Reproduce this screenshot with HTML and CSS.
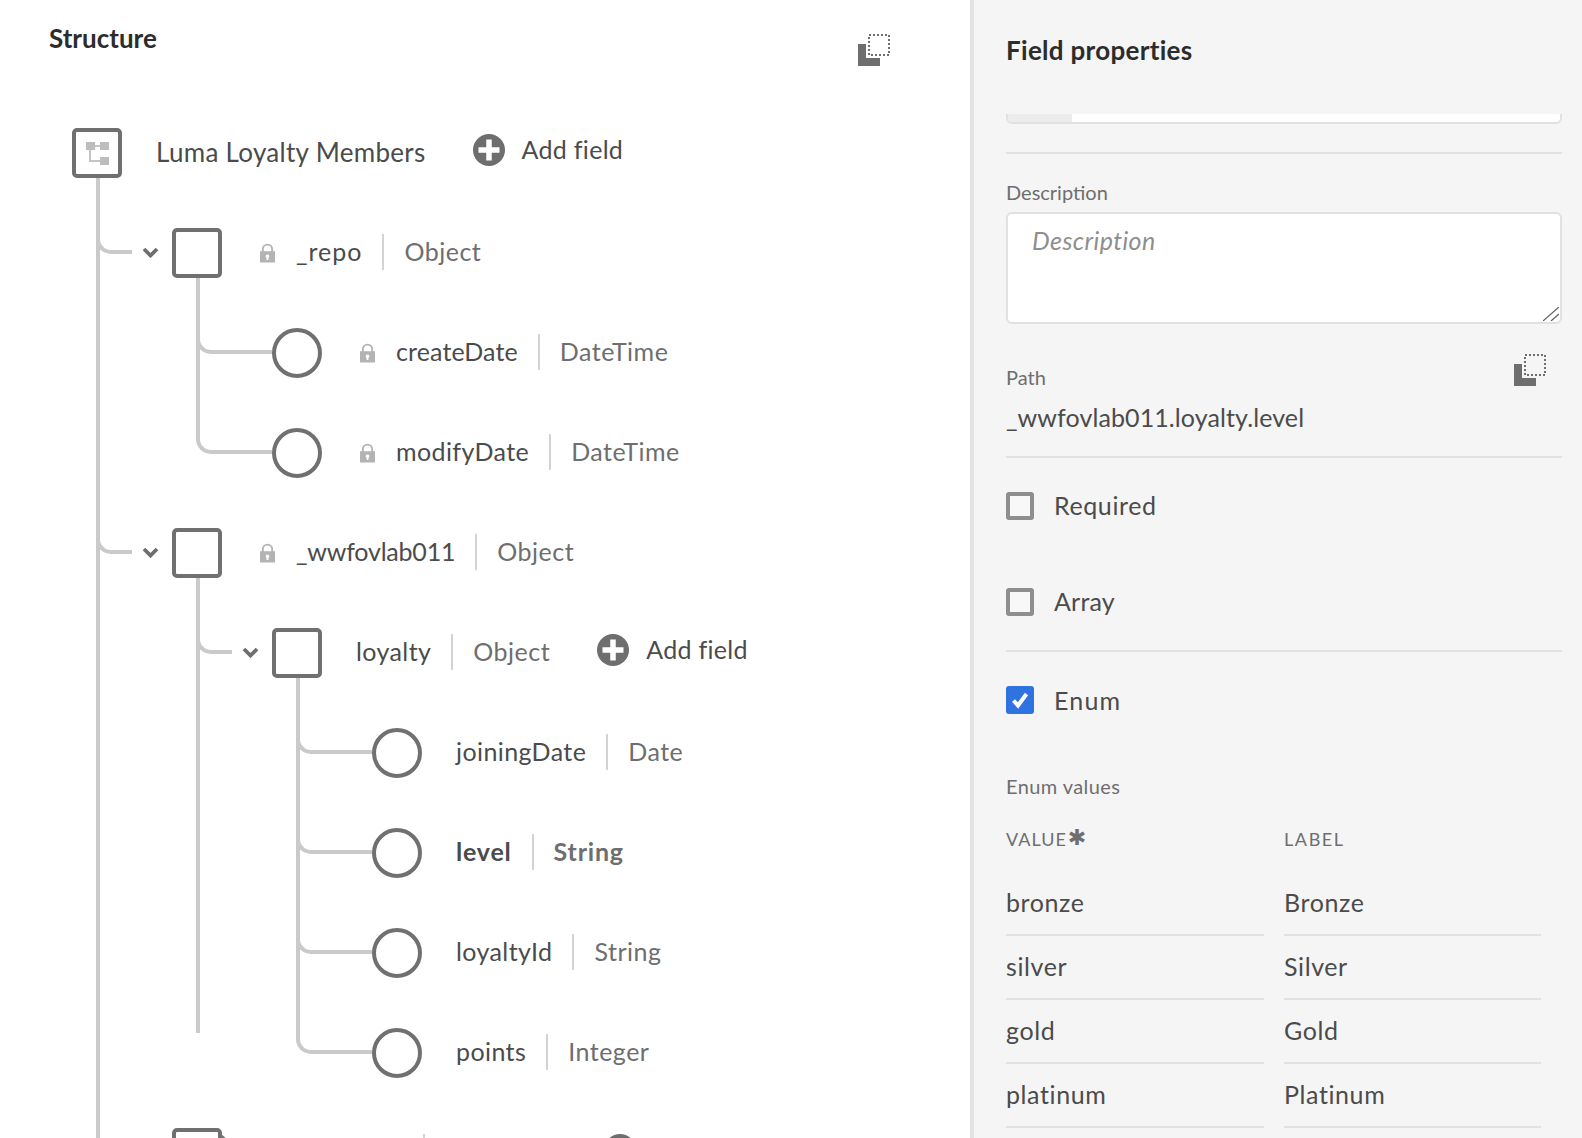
FILE: index.html
```html
<!DOCTYPE html>
<html lang="en">
  <head>
    <meta charset="UTF-8" />
    <title>Schema structure</title>
    <link rel="stylesheet" href="styles.css">
  </head>
  <body>
    <svg class="defs" width="0" height="0">
      <symbol id="copy" viewBox="0 0 32 32">
        <path d="M0 10H8V24H22V32H0Z" fill="#6e6e6e" />
        <rect x="11" y="1" width="20" height="20" fill="none" stroke="#6e6e6e" stroke-width="2" stroke-dasharray="2 2" />
      </symbol>
      <symbol id="plus" viewBox="0 0 32 32">
        <circle cx="16" cy="16" r="16" fill="#6e6e6e" />
        <path d="M16 5.500V26.500M5.500 16H26.500" stroke="#fff" stroke-width="5.500" />
      </symbol>
      <symbol id="lock" viewBox="0 0 16 20">
        <path d="M0 8H2V6A6 6 0 0 1 14 6V8H16V20H0ZM4 8H12V6A4 4 0 0 0 4 6ZM8 11.500A2 2 0 0 0 7 15.200V17.500H9V15.200A2 2 0 0 0 8 11.500Z" fill="#b3b3b3" fill-rule="evenodd" />
      </symbol>
      <symbol id="chevron" viewBox="0 0 17 11">
        <path d="M2 2L8.500 8.500L15 2" fill="none" stroke="#6e6e6e" stroke-width="3.800" />
      </symbol>
    </svg>

    <main class="structure">
      <header class="structure-head">
        <h2 class="title">Structure</h2>
        <svg class="copy-icon"><use href="#copy" /></svg>
      </header>

      <ul class="tree">
        <li>
          <div class="row">
            <span class="shape box">
              <svg class="schema-icon" viewBox="0 0 23 23">
                <path d="M4 8V19H14M9 4H14" fill="none" stroke="#c4c4c4" stroke-width="2" />
                <rect width="9" height="8" fill="#bdbdbd" />
                <rect x="14" width="9" height="8" fill="#bdbdbd" />
                <rect x="14" y="15" width="9" height="8" fill="#bdbdbd" />
              </svg>
            </span>
            <span class="name plain root-name">Luma Loyalty Members</span>
            <span class="add"><svg class="plus-icon"><use href="#plus" /></svg>Add field</span>
          </div>

          <ul class="children top">
            <li>
              <div class="row">
                <span class="gutter"><i class="elbow short"></i><svg class="chevron"><use href="#chevron" /></svg></span>
                <span class="shape box"></span>
                <svg class="lock"><use href="#lock" /></svg>
                <span class="name wide">_repo</span><span class="type">Object</span>
              </div>
              <ul class="children">
                <li>
                  <div class="row">
                    <span class="gutter"><i class="elbow"></i></span>
                    <span class="shape circle"></span>
                    <svg class="lock"><use href="#lock" /></svg>
                    <span class="name tight">createDate</span><span class="type">DateTime</span>
                  </div>
                </li>
                <li>
                  <div class="row">
                    <span class="gutter"><i class="elbow"></i></span>
                    <span class="shape circle"></span>
                    <svg class="lock"><use href="#lock" /></svg>
                    <span class="name">modifyDate</span><span class="type">DateTime</span>
                  </div>
                </li>
              </ul>
            </li>
            <li>
              <div class="row">
                <span class="gutter"><i class="elbow short"></i><svg class="chevron"><use href="#chevron" /></svg></span>
                <span class="shape box"></span>
                <svg class="lock"><use href="#lock" /></svg>
                <span class="name narrow">_wwfovlab011</span><span class="type">Object</span>
              </div>
              <ul class="children">
                <li>
                  <div class="row">
                    <span class="gutter"><i class="elbow short"></i><svg class="chevron"><use href="#chevron" /></svg></span>
                    <span class="shape box"></span>
                    <span class="name plain">loyalty</span><span class="type">Object</span>
                    <span class="add"><svg class="plus-icon"><use href="#plus" /></svg>Add field</span>
                  </div>
                  <ul class="children">
                    <li>
                      <div class="row">
                        <span class="gutter"><i class="elbow"></i></span>
                        <span class="shape circle"></span>
                        <span class="name plain">joiningDate</span><span class="type">Date</span>
                      </div>
                    </li>
                    <li>
                      <div class="row selected">
                        <span class="gutter"><i class="elbow"></i></span>
                        <span class="shape circle"></span>
                        <span class="name plain">level</span><span class="type">String</span>
                      </div>
                    </li>
                    <li>
                      <div class="row">
                        <span class="gutter"><i class="elbow"></i></span>
                        <span class="shape circle"></span>
                        <span class="name plain">loyaltyId</span><span class="type">String</span>
                      </div>
                    </li>
                    <li>
                      <div class="row">
                        <span class="gutter"><i class="elbow"></i></span>
                        <span class="shape circle"></span>
                        <span class="name plain">points</span><span class="type">Integer</span>
                      </div>
                    </li>
                  </ul>
                </li>
              </ul>
            </li>
            <li>
              <div class="row">
                <span class="gutter"><i class="elbow short"></i><svg class="chevron"><use href="#chevron" /></svg></span>
                <span class="shape box notched"></span>
                <span class="cut-name"></span><span class="cut-type"></span>
                <svg class="plus-icon cut-plus"><use href="#plus" /></svg>
              </div>
            </li>
          </ul>
        </li>
      </ul>
    </main>

    <aside class="panel">
      <header class="panel-head">
        <h2 class="title">Field properties</h2>
      </header>

      <div class="clipped-field"><span class="clipped-tab"></span></div>
      <hr class="rule first" />

      <label class="field-label desc-label" for="description">Description</label>
      <div class="desc-wrap">
        <textarea id="description" class="desc-input" placeholder="Description"></textarea>
        <svg class="resize-handle" viewBox="0 0 16 14"><path d="M0 14L16 0M8 14L16 7" stroke="#5c5c5c" stroke-width="1.200" /></svg>
      </div>

      <div class="path-head">
        <span class="field-label path-label">Path</span>
        <svg class="copy-icon"><use href="#copy" /></svg>
      </div>
      <div class="path-value">_wwfovlab011.loyalty.level</div>
      <hr class="rule after-path" />

      <div class="check first-check"><span class="checkbox"></span>Required</div>
      <div class="check array-check"><span class="checkbox"></span>Array</div>
      <hr class="rule after-array" />
      <div class="check enum-check">
        <span class="checkbox on">
          <svg viewBox="0 0 28 28" width="28" height="28"><path d="M7.500 14.500L12 19.500L20.500 8" fill="none" stroke="#fff" stroke-width="4" /></svg>
        </span>Enum
      </div>

      <div class="field-label enum-label">Enum values</div>
      <div class="enum-grid">
        <div class="enum-head">VALUE<span class="star">✱</span></div>
        <div class="enum-head label-head">LABEL</div>
        <div class="enum-cell first-cell">bronze</div>
        <div class="enum-cell first-cell">Bronze</div>
        <div class="enum-cell">silver</div>
        <div class="enum-cell">Silver</div>
        <div class="enum-cell">gold</div>
        <div class="enum-cell">Gold</div>
        <div class="enum-cell">platinum</div>
        <div class="enum-cell">Platinum</div>
      </div>
    </aside>
  </body>
</html>
```

FILE: styles.css
```css
html,
body {
  height: 100%;
}

body {
  margin: 0;
  display: flex;
  height: 1138px;
  overflow: hidden;
  background-color: #fff;
  font-family: Lato, "Noto Sans", sans-serif;
  color: #4b4b4b;
}

.defs {
  position: absolute;
}

.title {
  margin: 0;
  font-size: 26px;
  line-height: 32px;
  font-weight: 700;
  color: #2c2c2c;
}

.copy-icon {
  width: 32px;
  height: 32px;
  flex: none;
}

/* Left side: tree */
.structure {
  width: 970px;
  flex: none;
  overflow: hidden;
}

.structure-head {
  display: flex;
  justify-content: space-between;
  height: 103px;
  box-sizing: border-box;
  padding: 22px 80px 0 49px;
}

.structure-head .copy-icon {
  margin-top: 12px;
}

ul {
  list-style: none;
  margin: 0;
  padding: 0;
}

.tree {
  margin-left: 72px;
}

.children {
  position: relative;
  margin-left: 100px;
}

.children.top {
  margin-left: 0;
}

/* Vertical line under each parent */
.children::before {
  content: "";
  position: absolute;
  left: 24px;
  top: -25px;
  bottom: 70px;
  width: 4px;
  background-color: #cacaca;
}

.row {
  display: flex;
  align-items: center;
  height: 100px;
  font-size: 25px;
}

.gutter {
  display: flex;
  align-self: stretch;
  flex: none;
  width: 100px;
  padding-left: 24px;
  box-sizing: border-box;
}

.elbow {
  display: block;
  width: 76px;
  height: 21px;
  margin-top: 30px;
  box-sizing: border-box;
  border-left: 4px solid #cacaca;
  border-bottom: 4px solid #cacaca;
  border-bottom-left-radius: 15px;
}

.elbow.short {
  width: 36px;
}

.chevron {
  width: 17px;
  height: 11px;
  margin: 44px 0 0 10px;
}

.shape {
  position: relative;
  display: flex;
  align-items: center;
  justify-content: center;
  flex: none;
  width: 50px;
  height: 50px;
  box-sizing: border-box;
  border: 4px solid #707070;
  background-color: #fff;
}

.box {
  border-radius: 5px;
}

.circle {
  border-radius: 50%;
}

.notched::after {
  content: "";
  position: absolute;
  left: 100%;
  top: 2px;
  width: 7px;
  height: 6px;
  margin-left: 3px;
  background-color: #707070;
  clip-path: polygon(0 0, 100% 100%, 0 100%);
}

.schema-icon {
  width: 23px;
  height: 23px;
}

.lock {
  width: 15px;
  height: 20px;
  flex: none;
  margin-left: 38px;
}

.name {
  margin-left: 21px;
  padding: 0 20px 4px 0;
  letter-spacing: 0.4px;
}

.name.plain {
  margin-left: 34px;
}

.name.tight {
  letter-spacing: 0.1px;
}

.name.narrow {
  letter-spacing: -0.2px;
}

.name.wide {
  letter-spacing: 1px;
}

.root-name {
  padding-bottom: 2px;
  font-size: 26px;
  letter-spacing: 0.3px;
}

.type {
  height: 36px;
  margin-bottom: 2px;
  line-height: 34px;
  padding-left: 20px;
  border-left: 2px solid #d3d3d3;
  color: #6e6e6e;
  letter-spacing: 0.5px;
}

.selected .name,
.selected .type {
  font-weight: 700;
  letter-spacing: 0.8px;
}

.add {
  display: flex;
  align-items: flex-start;
  gap: 17px;
  margin: 0 0 6px 47px;
  line-height: 30px;
  letter-spacing: 0.3px;
}

.root-name + .add {
  margin-left: 27px;
}

.plus-icon {
  width: 32px;
  height: 32px;
  flex: none;
}

.cut-name {
  width: 201px;
  flex: none;
}

.cut-type {
  width: 166px;
  height: 36px;
  margin-bottom: 2px;
  flex: none;
  border-left: 2px solid #d3d3d3;
  box-sizing: border-box;
}

.cut-plus {
  margin: 0 0 6px 15px;
}

/* Right side: properties */
.panel {
  flex: 1;
  box-sizing: border-box;
  padding: 0 20px 0 32px;
  border-left: 4px solid #e3e3e3;
  background-color: #f5f5f5;
  overflow: hidden;
}

.panel-head {
  height: 114px;
  box-sizing: border-box;
  padding-top: 34px;
}

.panel-head .title {
  letter-spacing: 0.3px;
}

.clipped-field {
  height: 10px;
  box-sizing: border-box;
  border: 2px solid #e1e1e1;
  border-top: none;
  border-radius: 0 0 6px 6px;
  background-color: #fff;
  overflow: hidden;
}

.clipped-tab {
  display: block;
  width: 64px;
  height: 100%;
  background-color: #ececec;
}

.rule {
  height: 2px;
  margin: 0;
  border: none;
  background-color: #e1e1e1;
}

.rule.first {
  margin-top: 28px;
}

.rule.after-path {
  margin-top: 24px;
}

.rule.after-array {
  margin-top: 34px;
}

.field-label {
  display: block;
  font-size: 20px;
  line-height: 24px;
  color: #6e6e6e;
}

.desc-label {
  margin: 26px 0 8px;
}

.desc-wrap {
  position: relative;
}

.desc-input {
  display: block;
  width: 100%;
  height: 112px;
  box-sizing: border-box;
  padding: 11px 24px;
  border: 2px solid #e1e1e1;
  border-radius: 6px;
  background-color: #fff;
  font-family: inherit;
  font-size: 25px;
  letter-spacing: 0.4px;
  outline: none;
  resize: none;
}

.desc-input::placeholder {
  color: #8e8e8e;
  font-style: italic;
}

.resize-handle {
  position: absolute;
  right: 3px;
  bottom: 3px;
  width: 16px;
  height: 14px;
}

.path-head {
  display: flex;
  justify-content: space-between;
  height: 37px;
  margin-top: 30px;
  padding-right: 16px;
}

.path-label {
  margin-top: 11px;
}

.path-value {
  margin-top: 11px;
  font-size: 25px;
  line-height: 30px;
  letter-spacing: 0.1px;
}

.check {
  display: flex;
  align-items: flex-start;
  gap: 20px;
  height: 28px;
  font-size: 25px;
  line-height: 26px;
  letter-spacing: 0.6px;
}

.first-check,
.enum-check {
  margin-top: 34px;
}

.array-check {
  margin-top: 68px;
  letter-spacing: 0.2px;
}

.enum-check {
  line-height: 28px;
  letter-spacing: 1.2px;
}

.checkbox {
  width: 28px;
  height: 28px;
  flex: none;
  box-sizing: border-box;
  border: 4px solid #8e8e8e;
  border-radius: 3px;
  background-color: #f8f8f8;
}

.checkbox.on {
  border: none;
  background-color: #2f73e0;
}

.checkbox svg {
  display: block;
}

.enum-label {
  margin-top: 60px;
  letter-spacing: 0.4px;
}

.enum-grid {
  display: grid;
  grid-template-columns: 258px 257px;
  column-gap: 20px;
  margin-top: 30px;
}

.enum-head {
  height: 44px;
  font-size: 18px;
  line-height: 22px;
  letter-spacing: 1px;
  color: #6e6e6e;
}

.label-head {
  letter-spacing: 1.6px;
}

.star {
  margin-left: 1px;
  font-family: "DejaVu Sans", sans-serif;
  font-size: 22px;
  line-height: 0;
  letter-spacing: 0;
  vertical-align: 1px;
}

.enum-cell {
  height: 64px;
  box-sizing: border-box;
  border-bottom: 2px solid #e1e1e1;
  font-size: 25px;
  line-height: 60px;
  letter-spacing: 0.6px;
}
```
